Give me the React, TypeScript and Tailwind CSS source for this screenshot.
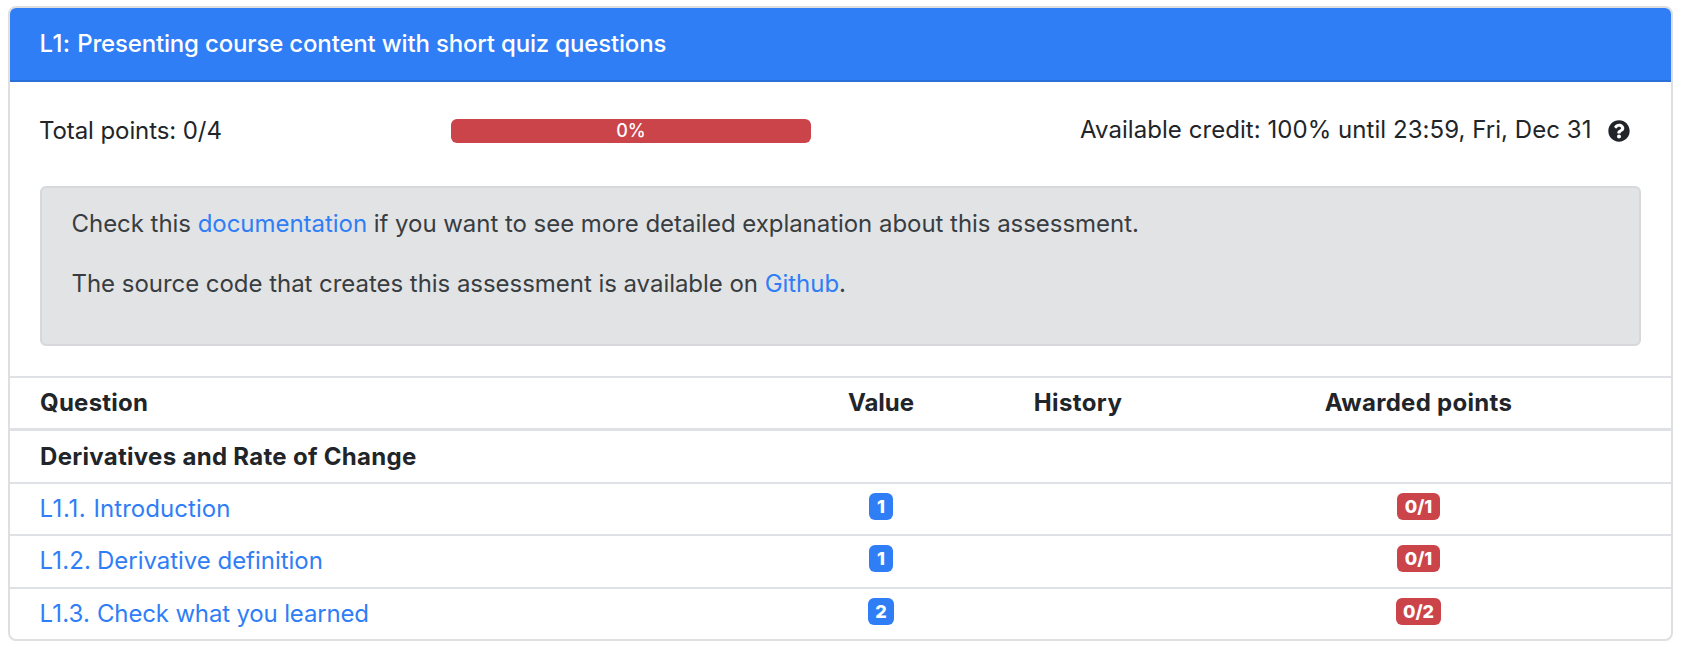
import React from "react";
import { FaQuestionCircle } from "react-icons/fa";

interface Question {
  number: string;
  title: string;
  value: number;
  awarded: string;
  height: string;
  numberWidth: string;
  tracking: string;
}

const questions: Question[] = [
  { number: "L1.1.", title: "Introduction", value: 1, awarded: "0/1", height: "h-[52px]", numberWidth: "w-[54px] tracking-[0.6px]", tracking: "tracking-[0.06px]" },
  { number: "L1.2.", title: "Derivative definition", value: 1, awarded: "0/1", height: "h-[53px]", numberWidth: "w-[57.5px] tracking-[0.2px]", tracking: "tracking-[-0.03px]" },
  { number: "L1.3.", title: "Check what you learned", value: 2, awarded: "0/2", height: "h-[52px]", numberWidth: "w-[57.5px] tracking-[0.2px]", tracking: "tracking-[-0.16px]" },
];

const columns = "grid grid-cols-[736px_210px_184px_497px] pl-[30px]";

function Badge({ color, children }: { color: string; children: React.ReactNode }) {
  return (
    <span
      className={`inline-flex h-[27px] items-center justify-center rounded-md text-[18px] leading-none font-extrabold text-white ${color}`}
    >
      {children}
    </span>
  );
}

export default function App() {
  return (
    <div className="h-[652px] w-[1686px] bg-white pt-[6px] pl-2 font-['Inter',sans-serif] text-[24px] leading-9 text-[#212529]">
      <main className="h-[635px] w-[1665px] overflow-hidden rounded-lg border-2 border-[#dfdfdf]">
        <header className="flex h-[74px] items-start border-b-2 border-[#2a70d7] bg-[#2f7ef6] pt-[18px] pl-[29.5px] font-medium text-white">
          <span className="tracking-[-0.17px] whitespace-nowrap">
            <span className="tracking-[0.4px]">L1: </span>Presenting course content with short quiz questions
          </span>
        </header>

        <section className="flex h-[104px] items-start pl-[29px]">
          <div className="w-[412px] pt-[31px] tracking-[-0.09px] whitespace-nowrap">Total points: 0/4</div>
          <div className="mt-[37px] flex h-6 w-[360px] items-center justify-center rounded-md bg-[#ca444a] text-[18px] leading-none font-medium text-white">
            0%
          </div>
          <div className="ml-auto flex items-start pt-[30px] pr-[41px]">
            <span className="tracking-[0.05px] whitespace-nowrap">Available credit: 100% until 23:59, Fri, Dec 31</span>
            <FaQuestionCircle className="mt-2 ml-[16.5px] size-[22px]" />
          </div>
        </section>

        <section className="mx-[30px] h-[160px] rounded-md border-2 border-[#d6d8db] bg-[#e2e3e5] pt-[18px] pl-[29.5px] tracking-[-0.04px] text-[#383d41]">
          <p className="mb-6 whitespace-nowrap">
            Check this <a className="text-[#2f7ef6]">documentation</a> if you want to see more detailed explanation about this assessment.
          </p>
          <p className="whitespace-nowrap">
            The source code that creates this assessment is available on <a className="text-[#2f7ef6]">Github</a>.
          </p>
        </section>

        <section className="mt-[30px] border-t-2 border-[#dee2e6]">
          <div className={`${columns} h-[53px] border-b-[3px] border-[#dee2e6] pt-[7px] font-bold`}>
            <div className="tracking-[0.25px]">Question</div>
            <div className="text-center">Value</div>
            <div className="text-center tracking-[0.4px]">History</div>
            <div className="text-center tracking-[0.3px]">Awarded points</div>
          </div>
          <div className="h-[51px] pt-[8px] pl-[30px] font-bold tracking-[0.3px]">Derivatives and Rate of Change</div>
          {questions.map((q) => (
            <div key={q.number} className={`${columns} ${q.height} border-t-2 border-[#dee2e6]`}>
              <a className="-ml-[0.5px] flex pt-[6.5px] whitespace-nowrap text-[#2f7ef6]">
                <span className={`shrink-0 ${q.numberWidth}`}>{q.number}</span>
                <span className={q.tracking}>{q.title}</span>
              </a>
              <div className="flex items-start justify-center pt-[9px]">
                <Badge color={q.value === 1 ? "w-6 bg-[#2f7ef6]" : "w-[26px] bg-[#2f7ef6]"}>{q.value}</Badge>
              </div>
              <div />
              <div className="flex items-start justify-center pt-[9px]">
                <Badge color={q.value === 1 ? "w-[43px] bg-[#ca444a]" : "w-[45px] bg-[#ca444a]"}>{q.awarded}</Badge>
              </div>
            </div>
          ))}
        </section>
      </main>
    </div>
  );
}
